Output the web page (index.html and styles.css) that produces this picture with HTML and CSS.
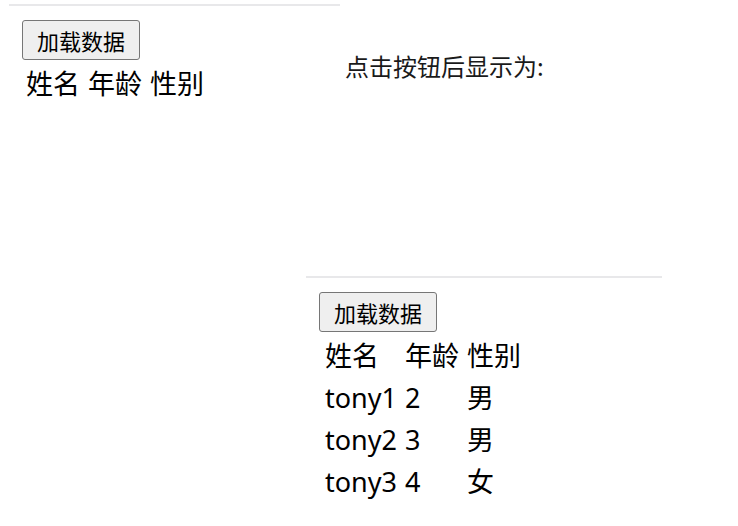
FILE: index.html
```html
<!DOCTYPE html>
<html lang="zh-CN">
<head>
<meta charset="utf-8">
<title>加载数据</title>
<link rel="stylesheet" href="styles.css">
</head>
<body>
<div class="top">
  <div class="panel panel-a">
    <button class="load-btn" type="button">加载数据</button>
    <table class="data">
      <tr><th>姓名</th><th>年龄</th><th>性别</th></tr>
    </table>
  </div>
  <p class="caption">点击按钮后显示为:</p>
</div>
<div class="panel panel-b">
  <button class="load-btn" type="button">加载数据</button>
  <table class="data">
    <tr><th class="c-name">姓名</th><th>年龄</th><th>性别</th></tr>
    <tr><td>tony1</td><td>2</td><td>男</td></tr>
    <tr><td>tony2</td><td>3</td><td>男</td></tr>
    <tr><td>tony3</td><td>4</td><td>女</td></tr>
  </table>
</div>
</body>
</html>
```
FILE: styles.css
```css
html, body {
  margin: 0;
  padding: 0;
  background: #ffffff;
}
body {
  font-family: "Noto Sans", "Noto Sans CJK SC", sans-serif;
  color: #000;
}
.top {
  display: flex;
  align-items: flex-start;
}
.panel {
  border-top: 2px solid #e8e8ea;
  padding-top: 14px;
  padding-left: 13px;
  box-sizing: border-box;
}
.panel-a {
  margin-top: 4px;
  margin-left: 9px;
  width: 331px;
}
.panel-b {
  margin-top: 169px;
  margin-left: 306px;
  width: 356px;
}
.caption {
  margin: 50px 0 0 5px;
  font-family: "Noto Sans CJK SC", sans-serif;
  font-size: 24px;
  line-height: 32px;
  color: #1a1a1a;
}
.load-btn {
  display: block;
  height: 40px;
  padding: 0 14px;
  font-family: "Noto Sans CJK SC", sans-serif;
  font-size: 22px;
  line-height: 1;
  color: #000;
  background: #efefef;
  border: 1px solid #767676;
  border-radius: 3px;
}
.data {
  margin-top: 1px;
  margin-left: -2px;
  border-spacing: 4px;
  font-size: 27px;
  line-height: 38px;
}
.panel-b .data {
  margin-left: 0;
}
.data th,
.data td {
  padding: 0 2px;
  font-weight: normal;
  text-align: left;
  white-space: nowrap;
}
.c-name {
  width: 72px;
}
```
